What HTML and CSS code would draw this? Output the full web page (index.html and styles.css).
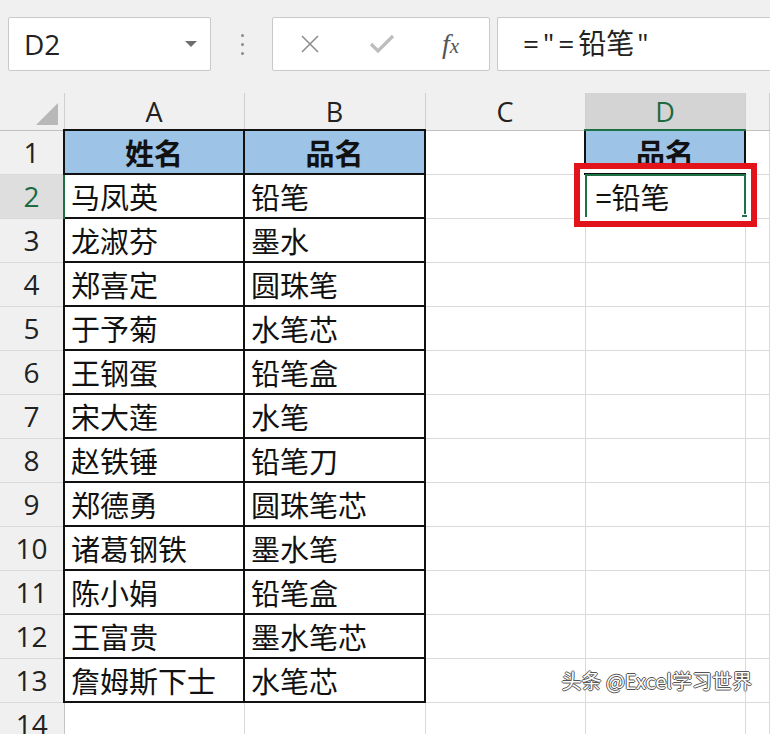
FILE: index.html
```html
<!DOCTYPE html>
<html lang="zh-CN">
<head>
    <meta charset="UTF-8">
    <title>Excel - 品名</title>
    <link rel="stylesheet" href="styles.css">
</head>
<body>
    <!-- Formula bar -->
    <header class="toolbar">
        <div class="namebox">
            <span>D2</span>
            <span class="caret"></span>
        </div>
        <div class="grip"><i></i><i></i><i></i></div>
        <div class="fxbtns">
            <svg class="btn-cancel" width="20" height="20" viewBox="0 0 20 20">
                <path d="M2 2 L18 18 M18 2 L2 18" stroke="#8e8e8e" stroke-width="1.6" fill="none"/>
            </svg>
            <svg class="btn-ok" width="26" height="20" viewBox="0 0 26 20">
                <path d="M2 10 L9 17 L24 2" stroke="#bdbdbd" stroke-width="3.2" fill="none"/>
            </svg>
            <span class="btn-fx">f<small>x</small></span>
        </div>
        <div class="formula">="=<span class="cjk">铅笔</span>"</div>
    </header>

    <!-- Sheet -->
    <main class="sheet">
        <table class="grid">
            <colgroup>
                <col class="c-row">
                <col class="c-a">
                <col class="c-b">
                <col class="c-c">
                <col class="c-d">
                <col>
            </colgroup>
            <thead>
                <tr>
                    <th class="corner">
                        <svg width="22" height="22" viewBox="0 0 22 22"><polygon points="0,22 22,22 22,0" fill="#b8b8b8"/></svg>
                    </th>
                    <th>A</th>
                    <th>B</th>
                    <th>C</th>
                    <th class="sel-col">D</th>
                    <th></th>
                </tr>
            </thead>
            <tbody>
                <tr>
                    <th>1</th>
                    <td class="t hd">姓名</td>
                    <td class="t hd">品名</td>
                    <td></td>
                    <td class="t hd">品名</td>
                    <td></td>
                </tr>
                <tr>
                    <th class="sel-row">2</th>
                    <td class="t">马凤英</td>
                    <td class="t">铅笔</td>
                    <td></td>
                    <td class="active">
                        =铅笔
                        <span class="frame"><span class="handle"></span></span>
                        <span class="mark"></span>
                    </td>
                    <td></td>
                </tr>
                <tr><th>3</th><td class="t">龙淑芬</td><td class="t">墨水</td><td></td><td></td><td></td></tr>
                <tr><th>4</th><td class="t">郑喜定</td><td class="t">圆珠笔</td><td></td><td></td><td></td></tr>
                <tr><th>5</th><td class="t">于予菊</td><td class="t">水笔芯</td><td></td><td></td><td></td></tr>
                <tr><th>6</th><td class="t">王钢蛋</td><td class="t">铅笔盒</td><td></td><td></td><td></td></tr>
                <tr><th>7</th><td class="t">宋大莲</td><td class="t">水笔</td><td></td><td></td><td></td></tr>
                <tr><th>8</th><td class="t">赵铁锤</td><td class="t">铅笔刀</td><td></td><td></td><td></td></tr>
                <tr><th>9</th><td class="t">郑德勇</td><td class="t">圆珠笔芯</td><td></td><td></td><td></td></tr>
                <tr><th>10</th><td class="t">诸葛钢铁</td><td class="t">墨水笔</td><td></td><td></td><td></td></tr>
                <tr><th>11</th><td class="t">陈小娟</td><td class="t">铅笔盒</td><td></td><td></td><td></td></tr>
                <tr><th>12</th><td class="t">王富贵</td><td class="t">墨水笔芯</td><td></td><td></td><td></td></tr>
                <tr><th>13</th><td class="t">詹姆斯下士</td><td class="t">水笔芯</td><td></td><td></td><td></td></tr>
                <tr><th>14</th><td></td><td></td><td></td><td></td><td></td></tr>
            </tbody>
        </table>
        <div class="watermark">头条 @Excel学习世界</div>
    </main>
</body>
</html>
```

FILE: styles.css
```css
body {
    margin: 0;
    width: 770px;
    height: 734px;
    overflow: hidden;
    background-color: #fff;
    color: #111;
    font-family: "Open Sans", "Noto Sans CJK SC", sans-serif;
}

/* Formula bar */
.toolbar {
    display: flex;
    align-items: flex-start;
    height: 93px;
    padding: 17px 0 0 8px;
    box-sizing: border-box;
    background-color: #f0f0f0;
}

.namebox {
    display: flex;
    align-items: center;
    justify-content: space-between;
    width: 203px;
    height: 54px;
    padding: 0 13px 0 15px;
    box-sizing: border-box;
    background: #fff;
    border: 1px solid #c9c9c9;
    border-radius: 2px;
    font-size: 28px;
    color: #222;
}

.caret {
    width: 0;
    height: 0;
    border-left: 6px solid transparent;
    border-right: 6px solid transparent;
    border-top: 6px solid #6e6e6e;
}

.grip {
    display: flex;
    flex-direction: column;
    gap: 6px;
    margin: 17px 0 0 30px;
}

.grip i {
    display: block;
    width: 3px;
    height: 3px;
    border-radius: 50%;
    background: #8a8a8a;
}

.fxbtns {
    display: flex;
    align-items: center;
    width: 218px;
    height: 54px;
    margin-left: 28px;
    padding-left: 27px;
    box-sizing: border-box;
    background: #fff;
    border: 1px solid #c9c9c9;
    border-radius: 2px;
}

.btn-ok {
    margin-left: 49px;
}

.btn-fx {
    margin-left: 47px;
    font-family: "Liberation Serif", serif;
    font-style: italic;
    font-size: 28px;
    color: #555;
}

.btn-fx small {
    font-size: 21px;
}

.formula {
    flex: 1;
    height: 54px;
    margin-left: 7px;
    padding-left: 25px;
    box-sizing: border-box;
    background: #fff;
    border: 1px solid #c9c9c9;
    border-right: none;
    border-radius: 2px 0 0 2px;
    font-size: 28px;
    line-height: 50px;
    letter-spacing: 4px;
    color: #222;
}

.formula .cjk {
    letter-spacing: 0;
    padding-right: 3px;
}

/* Sheet */
.sheet {
    position: relative;
}

.grid {
    border-collapse: collapse;
    table-layout: fixed;
    width: 770px;
}

.c-row { width: 64px; }
.c-a { width: 180px; }
.c-b { width: 181px; }
.c-c { width: 160px; }
.c-d { width: 160px; }

.grid thead th {
    height: 36px;
    padding: 0;
    background: #f0f0f0;
    border-right: 1px solid #cfcfcf;
    border-bottom: 1px solid #bfbfbf;
    font-weight: normal;
    font-size: 27px;
    line-height: 1;
    color: #222;
}

.grid thead th.corner {
    height: 31px;
    padding: 0 6px 5px 0;
    vertical-align: bottom;
}

.corner svg {
    display: block;
    margin-left: auto;
}

.grid thead th.sel-col {
    background: #d4d4d4;
    color: #1d6b3e;
    border-bottom: 2px solid #1e7145;
}

.grid tbody th {
    height: 42px;
    padding: 0;
    background: #f0f0f0;
    border-right: 1px solid #c4c4c4;
    border-bottom: 1px solid #d9d9d9;
    font-weight: normal;
    font-size: 28px;
    line-height: 1;
    color: #222;
}

.grid tbody th.sel-row {
    background: #dedede;
    color: #1d6b3e;
    border-right: 2px solid #1e7145;
}

.grid td {
    height: 42px;
    padding: 0 0 0 6px;
    border: 1px solid #dadada;
    font-family: "Noto Sans CJK SC", sans-serif;
    font-size: 29px;
    line-height: 1;
    white-space: nowrap;
}

.grid td.t {
    border: 2px solid #111;
}

.grid td.hd {
    padding: 0;
    background: #9dc3e6;
    font-weight: bold;
    text-align: center;
}

/* Active cell + red annotation */
.grid td.active {
    position: relative;
    padding-left: 10px;
}

.frame {
    position: absolute;
    top: -1px;
    left: -1px;
    right: -1px;
    bottom: -1px;
    border: 2px solid #1e7145;
}

.handle {
    position: absolute;
    right: -5px;
    bottom: -5px;
    width: 6px;
    height: 6px;
    background: #1e7145;
    border: 1px solid #fff;
}

.mark {
    position: absolute;
    top: -12px;
    left: -12px;
    right: -12px;
    bottom: -9px;
    border: 6px solid #e3131c;
    box-shadow: inset 0 0 0 4px #fff;
}

.watermark {
    position: absolute;
    top: 573px;
    right: 18px;
    font-family: "Noto Sans CJK SC", sans-serif;
    font-size: 20px;
    color: #fff;
    text-shadow: 1px 0 0 #555, -1px 0 0 #555, 0 1px 0 #555, 0 -1px 0 #555;
}
```
